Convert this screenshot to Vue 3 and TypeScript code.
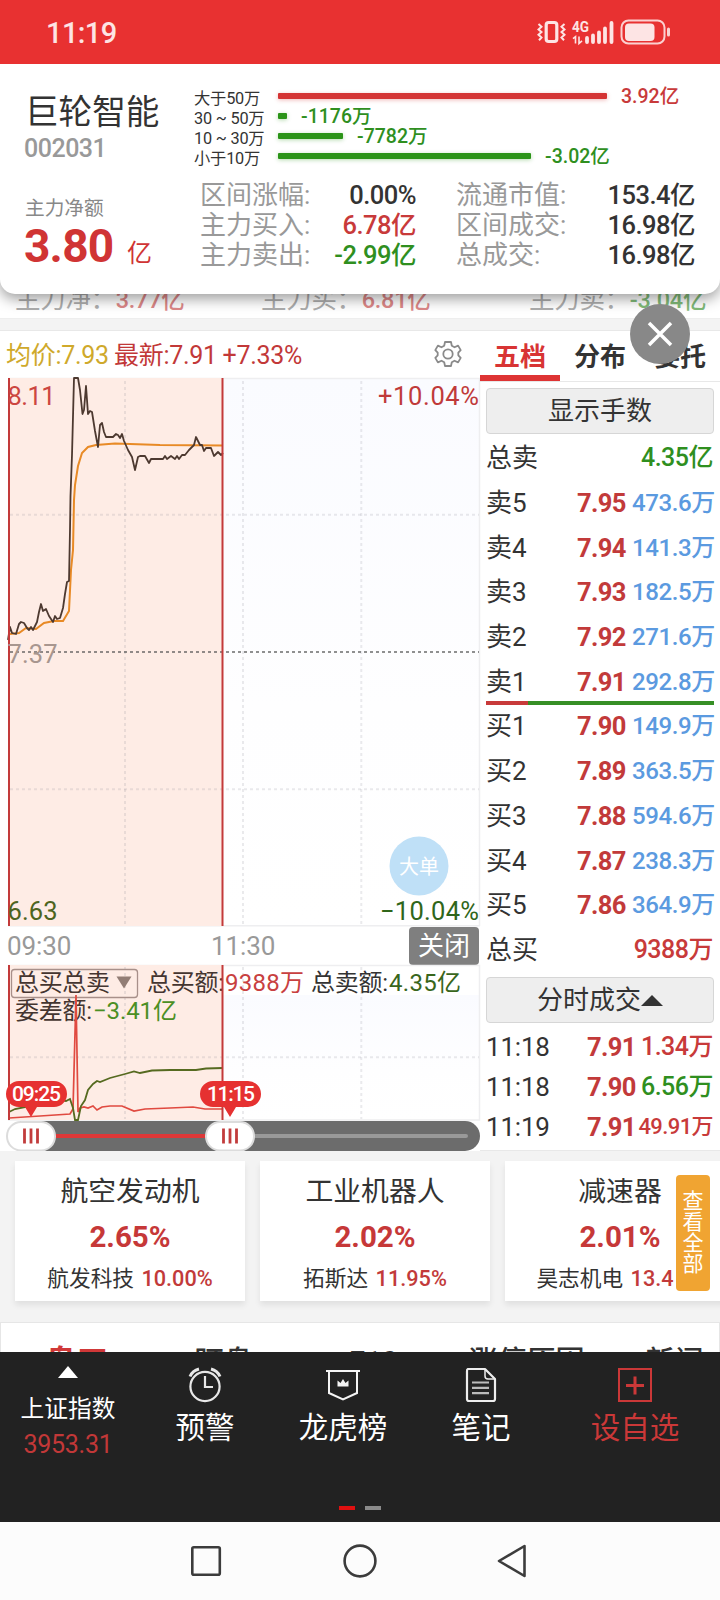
<script setup lang="ts">
interface Flow { label: string; width: number; value: string; tone: string }
interface Stat { label: string; value: string; tone: string }
interface Level { label: string; price: string; volume: string }

const flows: Flow[] = [
  { label: '大于50万', width: 329, value: '3.92亿', tone: 'up' },
  { label: '30 ~ 50万', width: 9, value: '-1176万', tone: 'down' },
  { label: '10 ~ 30万', width: 65, value: '-7782万', tone: 'down' },
  { label: '小于10万', width: 253, value: '-3.02亿', tone: 'down' },
]
const statsLeft: Stat[] = [
  { label: '区间涨幅:', value: '0.00%', tone: 'plain' },
  { label: '主力买入:', value: '6.78亿', tone: 'up' },
  { label: '主力卖出:', value: '-2.99亿', tone: 'down' },
]
const statsRight: Stat[] = [
  { label: '流通市值:', value: '153.4亿', tone: 'plain' },
  { label: '区间成交:', value: '16.98亿', tone: 'plain' },
  { label: '总成交:', value: '16.98亿', tone: 'plain' },
]
const sells: Level[] = [
  { label: '卖5', price: '7.95', volume: '473.6万' },
  { label: '卖4', price: '7.94', volume: '141.3万' },
  { label: '卖3', price: '7.93', volume: '182.5万' },
  { label: '卖2', price: '7.92', volume: '271.6万' },
  { label: '卖1', price: '7.91', volume: '292.8万' },
]
const buys: Level[] = [
  { label: '买1', price: '7.90', volume: '149.9万' },
  { label: '买2', price: '7.89', volume: '363.5万' },
  { label: '买3', price: '7.88', volume: '594.6万' },
  { label: '买4', price: '7.87', volume: '238.3万' },
  { label: '买5', price: '7.86', volume: '364.9万' },
]
const trades = [
  { time: '11:18', price: '7.91', amount: '1.34万', tone: 'up', small: false },
  { time: '11:18', price: '7.90', amount: '6.56万', tone: 'down', small: false },
  { time: '11:19', price: '7.91', amount: '49.91万', tone: 'up', small: true },
]
const sectors = [
  { name: '航空发动机', pct: '2.65%', stock: '航发科技', gain: '10.00%', cut: false },
  { name: '工业机器人', pct: '2.02%', stock: '拓斯达', gain: '11.95%', cut: false },
  { name: '减速器', pct: '2.01%', stock: '昊志机电', gain: '13.4', cut: true },
]

const priceLine = '8,640 10,627 12,633 16,634 19,624 21,622 24,623 27,628 29,630 31,627 33,630 35,626 37,622 39,612 41,604 43,611 46,609 49,616 53,622 55,616 57,619 60,618 63,608 65,594 67,582 69,581 70,530 70.5,496 72,455 74,378 78,378 80,390 82.5,414 84,410 86,386 88,414 90,411 92,412 95,431 98,447 100,425 102,423 104,432 106,437 113,437 116,434 118,435 120,438 122,434 124,441 128,450 132,457 135,470 138,457 140,456 145,456 149,463 151,459 163,459 165,456 167,459 171,456 175,459 177,456 179,459 182,455 185,455 189,450 194,445 196,437 198,441 200,445 202,445 204,451 206,448 211,448 214,456 216,454 218,452 221,455 223,453'
const averageLine = '10,634 19,633 26,628 36,629 44,623 54,621 63,621 69,611 71,570 73,550 74,500 75,485 78,466 82,453 88,447 96,445 115,443.5 130,444 160,445 223,445.5'
const totalBuyLine = '9,1118 40,1116 70,1114 73,1109 76,995 78,1112 80,1108 84,1107 88,1108 93,1106 97,1110 102,1107 110,1106 122,1106 134,1111 145,1109 170,1108 193,1107 205,1109 223,1109'
const totalSellLine = '9,1112 15,1109 40,1104 60,1100 66,1101 70,1099 73,1108 75,1120 78,1120 81,1106 85,1100 88,1090 93,1084 97,1081 100,1082 110,1078 125,1074 134,1071.5 140,1073 152,1070.5 170,1070 196,1070 206,1068.5 223,1068'
const gridX = [125, 243, 361.3]
</script>

<template>
  <div class="screen">
    <header class="status">
      <span class="clock">11:19</span>
      <svg class="status-icons" width="144" height="32" viewBox="536 16 144 32">
        <rect x="546.2" y="22.5" width="10.6" height="19" rx="2.5" fill="none" stroke="#fde4e4" stroke-width="3.2" />
        <path d="M538.5 24l3 2.7-3 2.7 3 2.7-3 2.7 3 2.7-2.5 2.7M564.5 24l-3 2.7 3 2.7-3 2.7 3 2.7-3 2.7 2.5 2.7" fill="none" stroke="#fde4e4" stroke-width="2" />
        <text x="572" y="32" class="net" textLength="17" lengthAdjust="spacingAndGlyphs">4G</text>
        <path d="M573 38.6l2.5-2v7M579 36.5v7l3-2.6" fill="none" stroke="#fde4e4" stroke-width="1.6" />
        <path d="M587 38v4M593 35.500v6.500M599 32.500v9.500M605 28.500v13.500M611.500 23v19" stroke="#fde4e4" stroke-width="3.8" stroke-linecap="round" />
        <rect x="621.500" y="20.500" width="43" height="23" rx="7" fill="none" stroke="#fbd0d0" stroke-width="2" />
        <rect x="625" y="23.500" width="29.500" height="17.500" rx="4" fill="#fde4e4" />
        <path d="M668.500 29v6" stroke="#fbd0d0" stroke-width="3" stroke-linecap="round" />
      </svg>
    </header>

    <section class="summary">
      <div class="identity">
        <h1>巨轮智能</h1>
        <div class="code">002031</div>
        <div class="net-label">主力净额</div>
        <div class="net-value"><b>3.80</b><span>亿</span></div>
      </div>
      <div class="figures">
        <div v-for="f in flows" :key="f.label" class="flow">
          <span class="flow-label">{{ f.label }}</span>
          <i class="flow-bar" :class="f.tone" :style="{ width: f.width + 'px' }"></i>
          <span class="flow-value" :class="f.tone">{{ f.value }}</span>
        </div>
        <div class="stats">
          <dl>
            <div v-for="s in statsLeft" :key="s.label" class="stat"><dt>{{ s.label }}</dt><dd :class="s.tone">{{ s.value }}</dd></div>
          </dl>
          <dl>
            <div v-for="s in statsRight" :key="s.label" class="stat"><dt>{{ s.label }}</dt><dd :class="s.tone">{{ s.value }}</dd></div>
          </dl>
        </div>
      </div>
    </section>

    <div class="behind">
      <p>主力净：<em class="up">3.77亿</em></p>
      <p>主力买：<em class="up">6.81亿</em></p>
      <p>主力卖：<em class="down">-3.04亿</em></p>
    </div>
    <div class="gap"></div>

    <main class="board">
      <div class="charts">
        <div class="quote">
          <span class="avg">均价:7.93</span>
          <span class="last">最新:7.91 +7.33%</span>
          <svg class="gear" width="28" height="28" viewBox="0 0 28 28" fill="none" stroke="#8a8a8a" stroke-width="1.800" stroke-linejoin="round">
            <path d="M11 2h6l.8 3.800 2.700 1.500 3.600-1.700 2.600 4.500-2.400 2.600v2.600l2.400 2.600-2.600 4.500-3.600-1.700-2.700 1.500L17 26h-6l-.8-3.800-2.700-1.500-3.600 1.700-2.600-4.500 2.400-2.600v-2.600L1.300 10.100l2.600-4.500 3.600 1.700 2.700-1.500z" />
            <circle cx="14" cy="14" r="4.700" />
          </svg>
        </div>

        <svg class="chart" width="480" height="548" viewBox="0 378 480 548">
          <defs>
            <linearGradient id="sheet" x1="0" y1="0" x2="0" y2="1">
              <stop offset="0" stop-color="#fafbff" /><stop offset=".6" stop-color="#fefeff" /><stop offset="1" stop-color="#fff" />
            </linearGradient>
          </defs>
          <rect x="8" y="378" width="471" height="548" fill="url(#sheet)" />
          <path d="M8 378.500H479.500V926M8 925.800H480" fill="none" stroke="#eeeef0" stroke-width="1.500" />
          <rect x="9" y="378" width="214" height="548" fill="#feece5" />
          <path v-for="x in gridX" :key="x" :d="`M${x} 381V924`" class="grid" />
          <path d="M10 514.800H479M10 789.300H479" class="grid" />
          <path d="M10 652H479" class="grid mid" />
          <polyline :points="averageLine" fill="none" stroke="#e88a26" stroke-width="2" />
          <polyline :points="priceLine" fill="none" stroke="#4d3930" stroke-width="1.800" stroke-linejoin="round" />
          <path d="M9 378V926M222.500 378V926" stroke="#c33a3a" stroke-width="2" />
          <text x="7.500" y="404.700" fill="#cc4640" textLength="48">8.11</text>
          <text x="7.500" y="663" fill="#a8968f" textLength="50">7.37</text>
          <text x="7.500" y="919.600" fill="#4d6420" textLength="50">6.63</text>
          <text x="378" y="404.700" fill="#c03a3a" textLength="101">+10.04%</text>
          <text x="380" y="919.600" fill="#2f661a" textLength="99">−10.04%</text>
          <circle cx="419" cy="866" r="29.500" fill="#bfe0f7" />
          <text x="399" y="874" class="big-order" textLength="40">大单</text>
        </svg>

        <div class="axis">
          <time>09:30</time>
          <time class="mid-time">11:30</time>
          <button class="close-range">关闭</button>
        </div>

        <svg class="chart" width="480" height="156" viewBox="0 965 480 156">
          <rect x="8" y="995" width="471" height="125" fill="url(#sheet)" />
          <path d="M8 965.500H479.500V1120H8" fill="none" stroke="#eeeef0" stroke-width="1.500" />
          <rect x="9" y="965" width="214" height="155" fill="#feece5" />
          <path v-for="x in gridX" :key="x" :d="`M${x} 967V1119`" class="grid" />
          <path d="M10 1057.300H479" class="grid" />
          <rect x="11.500" y="969.500" width="126" height="28" rx="3" fill="none" stroke="#a8908a" stroke-width="1.300" />
          <path d="M116.500 976.500h15l-7.500 12z" fill="#927d75" />
          <g class="legend">
            <text x="15" y="991" fill="#443530" textLength="95">总买总卖</text>
            <text x="147" y="991" fill="#443530" textLength="77">总买额:</text>
            <text x="225" y="991" fill="#c84040" textLength="79">9388万</text>
            <text x="311" y="991" fill="#333" textLength="77">总卖额:</text>
            <text x="389" y="991" fill="#38661c" textLength="72">4.35亿</text>
            <text x="15" y="1019" fill="#443530" textLength="77">委差额:</text>
            <text x="93" y="1019" fill="#4b8f24" textLength="84">−3.41亿</text>
          </g>
          <polyline :points="totalBuyLine" fill="none" stroke="#e04a40" stroke-width="1.700" />
          <polyline :points="totalSellLine" fill="none" stroke="#566a20" stroke-width="1.800" />
          <path d="M9 965V1120M222.500 965V1120" stroke="#c33a3a" stroke-width="2" />
          <path d="M19 1081h35a13 13 0 0 1 0 26h-17l-6 10-6-10h-6a13 13 0 0 1 0-26zM213 1081h35a13 13 0 0 1 0 26h-12l-6 10-6-10h-11a13 13 0 0 1 0-26z" fill="#e63131" />
          <text x="12" y="1101" class="pin" textLength="49">09:25</text>
          <text x="207" y="1101" class="pin" textLength="48">11:15</text>
        </svg>

        <svg class="slider" width="480" height="30" viewBox="0 0 480 30">
          <path d="M20 0H465a15 15 0 0 1 0 30H20z" fill="#6c6c6c" />
          <path d="M56 15H466" stroke="#999" stroke-width="4" stroke-linecap="round" />
          <path d="M50 15H210" stroke="#dd3838" stroke-width="4" />
          <g v-for="x in [31, 230]" :key="x">
            <rect :x="x - 24" y="1" width="48" height="28.500" rx="14" fill="#fff" stroke="#dcdcdc" stroke-width="2" />
            <path :d="`M${x - 6.500} 7.500v15M${x} 7.500v15M${x + 6.500} 7.500v15`" stroke="#c23c3c" stroke-width="2.800" />
          </g>
        </svg>
      </div>

      <aside class="book">
        <nav class="tabs"><a class="on">五档</a><a>分布</a><a>委托</a></nav>
        <button class="wide first">显示手数</button>
        <div class="row"><span class="side">总卖</span><span class="sum down">4.35亿</span></div>
        <div v-for="l in sells" :key="l.label" class="row">
          <span class="side">{{ l.label }}</span><b>{{ l.price }}</b><span class="vol">{{ l.volume }}</span>
        </div>
        <div class="ratio"><i></i></div>
        <div v-for="l in buys" :key="l.label" class="row">
          <span class="side">{{ l.label }}</span><b>{{ l.price }}</b><span class="vol">{{ l.volume }}</span>
        </div>
        <div class="row"><span class="side">总买</span><span class="sum up">9388万</span></div>
        <button class="wide second">分时成交<svg width="22" height="11" viewBox="0 0 22 11"><path d="M0 11L11 0l11 11z" fill="#333" /></svg></button>
        <div v-for="(t, i) in trades" :key="i" class="row trade">
          <span class="side">{{ t.time }}</span><b>{{ t.price }}</b><span class="amount" :class="[t.tone, { small: t.small }]">{{ t.amount }}</span>
        </div>
      </aside>
    </main>

    <section class="sectors">
      <article v-for="s in sectors" :key="s.name">
        <h2>{{ s.name }}</h2>
        <strong>{{ s.pct }}</strong>
        <p :class="{ cut: s.cut }">{{ s.stock }} <em>{{ s.gain }}</em></p>
      </article>
      <div class="view-all">查看全部</div>
    </section>

    <nav class="detail-tabs">
      <span class="on">盘口</span><span>盯盘</span><span>F10</span><span>涨停原因</span><span>新闻</span>
    </nav>

    <footer class="actions">
      <div class="items">
        <div class="index">
          <svg width="20" height="12" viewBox="0 0 20 12"><path d="M0 12L10 0l10 12z" fill="#fff" /></svg>
          <span>上证指数</span>
          <em>3953.31</em>
        </div>
        <div class="item">
          <svg width="36" height="36" viewBox="0 0 36 36" fill="none" stroke="#e8e8e8" stroke-width="2.200">
            <circle cx="18" cy="19.500" r="14.600" /><path d="M18 9v11h8" stroke-width="2.200" /><path d="M3 9.500C5 5 8 3 12 2M33 9.500C31 5 28 3 24 2" stroke-width="3" />
          </svg>
          <span>预警</span>
        </div>
        <div class="item">
          <svg width="36" height="36" viewBox="0 0 36 36" fill="none" stroke="#f4f4f4" stroke-width="2">
            <path d="M1 4h34M4 4v22l14 6.500L32 26V4" /><path d="M12.500 19.500v-6l3 2.500 2.500-4 2.500 4 3-2.500v6z" fill="#f4f4f4" stroke="none" />
          </svg>
          <span>龙虎榜</span>
        </div>
        <div class="item">
          <svg width="36" height="36" viewBox="0 0 36 36" fill="none" stroke="#eee" stroke-width="2.200" stroke-linejoin="round">
            <path d="M5 2h17l10 10v20a2 2 0 0 1-2 2H6a2 2 0 0 1-2-2V4a2 2 0 0 1 1-2z" /><path d="M22 2v7a3 3 0 0 0 3 3h7" stroke-width="1.500" /><path d="M9 15.500h17M9 20.800h17M9 26.200h17" stroke="#bbb" />
          </svg>
          <span>笔记</span>
        </div>
        <div class="item add">
          <svg width="36" height="36" viewBox="0 0 36 36" fill="none" stroke="#cb3838">
            <rect x="2" y="2" width="32" height="32" stroke-width="2" /><path d="M9 18.500h18M18 9.500v18" stroke-width="3" />
          </svg>
          <span>设自选</span>
        </div>
      </div>
      <div class="dots"><i></i><i></i></div>
    </footer>

    <div class="system">
      <svg width="720" height="78" viewBox="0 0 720 78" fill="none" stroke="#3c3c3c" stroke-width="2.600" stroke-linejoin="round">
        <rect x="192.300" y="25.300" width="27.500" height="27.500" rx="1.500" />
        <circle cx="360" cy="39" r="15.400" />
        <path d="M499 39l25.500-15v30z" />
      </svg>
    </div>

    <button class="dismiss">
      <svg width="26" height="26" viewBox="0 0 26 26"><path d="M2 2l22 22M24 2L2 24" stroke="#fff" stroke-width="3.500" /></svg>
    </button>
  </div>
</template>

<style>
body { margin: 0; background: #fff; }
</style>

<style scoped>
.screen { position: relative; display: flex; flex-direction: column; width: 720px; height: 1600px; overflow: hidden; background: #fff; color: #333; font-family: Roboto, "Noto Sans CJK SC", sans-serif; }
h1, h2, p, dl, dd, dt { margin: 0; font-weight: 400; }
em, i { font-style: normal; }
button { padding: 0; font-family: inherit; color: inherit; }
svg { display: block; flex: none; }
.up { color: #c83a3a; }
.down { color: #2f8f1f; }
.plain { color: #333; }

.status { position: relative; z-index: 3; flex: none; height: 64px; display: flex; align-items: center; justify-content: space-between; padding: 0 40px 0 46px; box-sizing: border-box; background: #e83131; }
.clock { font-size: 29px; letter-spacing: -.6px; line-height: 34px; padding-top: 1px; font-weight: 500; color: #fde4e4; }
.net { font-size: 14px; font-weight: 700; fill: #fde4e4; }

.summary { position: relative; z-index: 2; flex: none; height: 230px; display: flex; box-sizing: border-box; padding-left: 25px; background: #fff; border-radius: 0 0 15px 15px; box-shadow: 0 5px 14px rgba(0, 0, 0, .38); }
.identity { width: 169px; padding-top: 27px; box-sizing: border-box; }
h1 { height: 44px; font-size: 33.600px; line-height: 44px; }
.code { height: 28px; margin-left: -1px; font-size: 25px; line-height: 28px; letter-spacing: -.5px; font-weight: 500; color: #999; }
.net-label { margin-top: 32px; height: 28px; font-size: 19.700px; line-height: 28px; color: #888; }
.net-value { display: flex; align-items: baseline; height: 52px; line-height: 52px; margin: -3px 0 0 -1px; color: #d03434; }
.net-value b { font-size: 46px; font-weight: 700; width: 103px; letter-spacing: -.8px; }
.net-value span { font-size: 25px; }
.figures { width: 501px; padding-top: 22px; }
.flow { display: flex; align-items: center; height: 20px; }
.flow-label { width: 84px; font-size: 16.300px; letter-spacing: -.2px; white-space: nowrap; line-height: 20px; padding-top: 5px; }
.flow-bar { display: block; height: 6px; border-radius: 1px; background: #2b9418; box-shadow: 0 1px 4px rgba(43, 148, 24, .35); }
.flow-bar.up { background: #d43333; box-shadow: 0 1px 4px rgba(212, 51, 51, .35); }
.flow-value { margin-left: 14px; padding-top: 2px; font-size: 19.500px; font-weight: 500; line-height: 20px; }
.stats { display: flex; gap: 40px; padding: 14px 0 0 6px; }
.stats dl { width: 216px; }
.stats dl + dl { width: 239px; }
.stat { display: flex; justify-content: space-between; height: 30px; font-size: 26px; line-height: 30px; white-space: nowrap; }
.stat dt { color: #999; }
.stat dd { font-weight: 500; font-size: 25.500px; letter-spacing: -.5px; }

.behind { flex: none; height: 25px; box-sizing: border-box; display: flex; border-bottom: 1px solid #eee; overflow: hidden; padding-left: 15px; }
.behind p { flex: none; width: 246px; font-size: 25.500px; line-height: 30px; margin-top: -10px; letter-spacing: -.3px; color: #777; white-space: nowrap; opacity: .6; }
.behind p + p { width: 268px; }
.behind p + p + p { width: 191px; }
.behind em { font-size: 23.500px; font-weight: 500; }
.gap { flex: none; height: 12px; box-sizing: border-box; background: #f3f3f3; border-bottom: 1px solid #e8e8e8; }

.board { flex: none; display: flex; height: 820px; }
.charts { width: 480px; }
.quote { display: flex; align-items: center; height: 47px; padding: 0 0 4px 6px; box-sizing: border-box; font-size: 25px; letter-spacing: -.3px; white-space: nowrap; }
.avg { width: 108px; color: #cfa92b; }
.last { width: 320px; color: #c23838; }
.gear { margin-top: 3px; }
.chart { overflow: visible; font-size: 25.500px; }
.grid { fill: none; stroke: #8a8a98; stroke-opacity: .18; stroke-width: 2; stroke-dasharray: 3 3; }
.grid.mid { stroke: #555; stroke-opacity: .65; stroke-width: 1.800; }
.big-order { font-size: 20px; fill: #fff; }
.legend { font-size: 24px; }
.pin { font-size: 21px; font-weight: 500; fill: #fff; }
.axis { display: flex; align-items: center; height: 39px; padding-left: 7px; font-size: 26px; color: #999; letter-spacing: -.1px; }
.axis time { width: 204px; padding-top: 1px; }
.axis .mid-time { width: 198px; }
.close-range { width: 70px; height: 38px; border: 0; border-radius: 4px; background: #7f7f7f; color: #fff; font-size: 26px; line-height: 39px; }

.book { width: 240px; box-sizing: border-box; border-bottom: 1px solid #e8e8e8; }
.tabs { display: flex; height: 51px; box-sizing: border-box; border-bottom: 1px solid #e8e8e8; font-size: 26px; font-weight: 700; line-height: 52px; text-align: center; }
.tabs a { width: 80px; height: 50px; box-sizing: border-box; }
.tabs .on { color: #d83434; border-bottom: 6px solid #de3434; }
.wide { display: flex; align-items: center; justify-content: center; width: 228px; height: 46px; margin: 0 0 0 6px; box-sizing: border-box; border: 1px solid #d6d6d6; border-radius: 4px; background: #eee; font-size: 26px; line-height: 46px; }
.wide.first { margin-top: 6px; margin-bottom: 2px; }
.wide.second { margin-top: 5px; margin-bottom: 4px; }
.row { display: flex; align-items: center; height: 44.700px; padding: 0 7px 0 6px; font-size: 26px; line-height: 44px; white-space: nowrap; }
.side { flex: 1; }
.row b { width: 55px; font-size: 25.500px; letter-spacing: -.6px; color: #c23a3a; }
.vol { width: 81px; text-align: right; font-size: 24px; letter-spacing: -.4px; font-weight: 500; color: #5b9ae0; }
.sum { font-size: 25px; letter-spacing: -.5px; font-weight: 500; }
.ratio { height: 4px; margin: -3px 6px -1px; background: #368f25; }
.ratio i { display: block; width: 42px; height: 4px; background: #c83a3a; }
.trade { height: 40px; line-height: 40px; }
.trade .side { letter-spacing: -.2px; }
.trade b { width: 51px; }
.amount { width: 75px; text-align: right; font-size: 25px; letter-spacing: -.5px; font-weight: 500; }
.amount.small { font-size: 22px; letter-spacing: -.6px; }

.sectors { position: relative; flex: none; display: flex; gap: 15px; height: 171px; box-sizing: border-box; padding: 10px 0 0 15px; background: #f3f3f3; overflow: hidden; }
.sectors article { flex: none; width: 230px; height: 140px; background: #fff; text-align: center; box-shadow: 0 4px 6px rgba(0, 0, 0, .08); white-space: nowrap; }
h2 { font-size: 27.800px; line-height: 40px; padding-top: 11px; }
.sectors strong { display: block; font-size: 29.500px; line-height: 40px; margin-top: 5px; font-weight: 700; color: #c63838; letter-spacing: 0; }
.sectors p { font-size: 21.700px; line-height: 30px; margin-top: 7px; }
.sectors em { margin-left: 2px; font-weight: 500; color: #c23a3a; }
.sectors p.cut { padding-right: 30px; }
.view-all { position: absolute; left: 676px; top: 24px; width: 34px; height: 116px; box-sizing: border-box; padding: 16px 6.500px 0; border-radius: 4px; background: #f0a432; color: #fff; font-size: 21px; line-height: 21px; word-break: break-all; text-align: center; }

.detail-tabs { flex: none; display: grid; grid-template-columns: 151px 143px 157px 149px 147px; height: 30px; box-sizing: border-box; border: 1px solid #e6e6e6; border-bottom: 0; overflow: hidden; font-size: 29px; line-height: 78px; text-align: center; font-weight: 500; white-space: nowrap; }
.detail-tabs .on { font-size: 32px; font-weight: 700; color: #d03838; }

.actions { position: relative; flex: none; height: 170px; box-sizing: border-box; padding-top: 14px; background: #222; color: #fff; }
.items { display: grid; grid-template-columns: 136px 138px 138px 138px 170px; height: 140px; }
.index, .item { display: flex; flex-direction: column; align-items: center; }
.index span { margin-top: 13px; font-size: 23.700px; line-height: 36px; }
.index em { font-size: 25px; line-height: 36px; color: #c23838; letter-spacing: -.3px; }
.item { font-size: 29.500px; line-height: 40px; }
.item svg { margin-top: 1px; }
.item span { margin-top: 5px; }
.item.add { color: #cb3838; }
.dots { display: flex; justify-content: center; gap: 10px; }
.dots i { width: 16px; height: 4px; background: #8a8a8a; }
.dots i:first-child { background: #e01010; }
.system { flex: none; height: 78px; background: #fcfcfc; }

.dismiss { position: absolute; z-index: 3; left: 630px; top: 304px; width: 60px; height: 60px; display: flex; align-items: center; justify-content: center; border: 0; border-radius: 50%; background: #888; }
</style>
